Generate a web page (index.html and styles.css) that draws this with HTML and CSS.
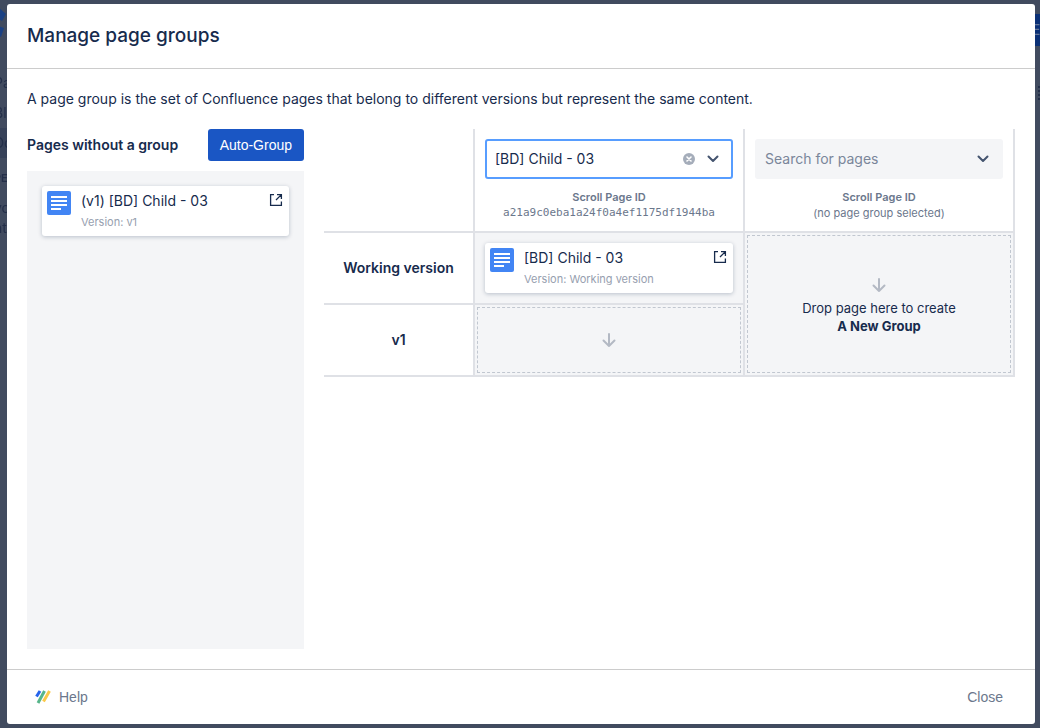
FILE: index.html
```html
<!DOCTYPE html>
<html lang="en">
<head>
    <meta charset="UTF-8">
    <meta name="viewport" content="width=device-width, initial-scale=1.0">
    <title>Manage page groups</title>
    <link rel="stylesheet" href="styles.css">
</head>
<body>
    <!-- Page behind the dialog -->
    <div class="backdrop" aria-hidden="true">
        <div class="page-sidebar">
            <svg class="page-logo" width="24" height="40" viewBox="0 0 24 40">
                <path d="M0 3L5 0L12 6L8 13L0 8ZM0 20L3 18L10 20L7 29L0 26Z" fill="#1b4184"/>
            </svg>
            <div class="page-link">Pa</div>
            <div class="page-link">Blo</div>
            <div class="page-link active">Do</div>
            <div class="page-heading">PE</div>
            <div class="page-note">yo<br>nt</div>
        </div>
        <div class="page-actions">
            <div class="page-edit">E</div>
            <div class="page-lines"></div>
        </div>
    </div>

    <div class="modal" role="dialog" aria-labelledby="modalTitle">
        <header class="modal-header">
            <h1 id="modalTitle">Manage page groups</h1>
        </header>

        <main class="modal-body">
            <p class="intro">A page group is the set of Confluence pages that belong to different versions but represent the same content.</p>

            <div class="columns">
                <!-- Ungrouped pages -->
                <section class="ungrouped">
                    <div class="ungrouped-header">
                        <h2>Pages without a group</h2>
                        <button type="button" class="primary-button">Auto-Group</button>
                    </div>
                    <div class="page-list">
                        <div class="page-card">
                            <svg class="page-icon" width="24" height="24" viewBox="0 0 24 24">
                                <rect width="24" height="24" rx="2" fill="#4285f4"/>
                                <path d="M4 6h16M4 10h16M4 14h16M4 18h10" stroke="#fff" stroke-width="2"/>
                            </svg>
                            <div class="page-text">
                                <div class="page-title">(v1) [BD] Child - 03</div>
                                <div class="page-version">Version: v1</div>
                            </div>
                            <a href="#" class="open-link" aria-label="Open page">
                                <svg width="14" height="14" viewBox="0 0 14 14" fill="none" stroke="#172b4d" stroke-width="1.3">
                                    <path d="M5 1.600H1.600v10.800h10.800V8.500M8 1.600h4.400V6M12.400 1.600L7 7"/>
                                </svg>
                            </a>
                        </div>
                    </div>
                </section>

                <!-- Groups by version -->
                <table class="groups">
                    <thead>
                        <tr>
                            <td class="version-col"></td>
                            <th scope="col">
                                <div class="search-box focused">
                                    <input type="text" value="[BD] Child - 03" aria-label="Page group">
                                    <button type="button" class="icon-button" aria-label="Clear">
                                        <svg width="12" height="12" viewBox="0 0 12 12">
                                            <circle cx="6" cy="6" r="6" fill="#a5adba"/>
                                            <path d="M4 4l4 4M8 4l-4 4" stroke="#fff" stroke-width="1.6" stroke-linecap="round"/>
                                        </svg>
                                    </button>
                                    <button type="button" class="icon-button" aria-label="Show pages">
                                        <svg width="12" height="8" viewBox="0 0 12 8" fill="none" stroke="#44546f" stroke-width="2" stroke-linecap="round" stroke-linejoin="round">
                                            <path d="M1.500 1.500L6 6l4.500-4.500"/>
                                        </svg>
                                    </button>
                                </div>
                                <div class="id-label">Scroll Page ID</div>
                                <div class="id-value mono">a21a9c0eba1a24f0a4ef1175df1944ba</div>
                            </th>
                            <th scope="col">
                                <div class="search-box">
                                    <input type="text" placeholder="Search for pages" aria-label="New page group">
                                    <button type="button" class="icon-button" aria-label="Show pages">
                                        <svg width="12" height="8" viewBox="0 0 12 8" fill="none" stroke="#44546f" stroke-width="2" stroke-linecap="round" stroke-linejoin="round">
                                            <path d="M1.500 1.500L6 6l4.500-4.500"/>
                                        </svg>
                                    </button>
                                </div>
                                <div class="id-label">Scroll Page ID</div>
                                <div class="id-value">(no page group selected)</div>
                            </th>
                        </tr>
                    </thead>
                    <tbody>
                        <tr>
                            <th scope="row" class="version-name">Working version</th>
                            <td class="filled">
                                <div class="page-card">
                                    <svg class="page-icon" width="24" height="24" viewBox="0 0 24 24">
                                        <rect width="24" height="24" rx="2" fill="#4285f4"/>
                                        <path d="M4 6h16M4 10h16M4 14h16M4 18h10" stroke="#fff" stroke-width="2"/>
                                    </svg>
                                    <div class="page-text">
                                        <div class="page-title">[BD] Child - 03</div>
                                        <div class="page-version">Version: Working version</div>
                                    </div>
                                    <a href="#" class="open-link" aria-label="Open page">
                                        <svg width="14" height="14" viewBox="0 0 14 14" fill="none" stroke="#172b4d" stroke-width="1.3">
                                            <path d="M5 1.600H1.600v10.800h10.800V8.500M8 1.600h4.400V6M12.400 1.600L7 7"/>
                                        </svg>
                                    </a>
                                </div>
                            </td>
                            <td class="drop-cell" rowspan="2">
                                <div class="drop-zone tall">
                                    <svg width="24" height="24" viewBox="0 0 24 24" fill="none" stroke="#b3b9c4" stroke-width="2" stroke-linecap="round" stroke-linejoin="round">
                                        <path d="M12 6v12M6.500 12.500L12 18l5.500-5.500"/>
                                    </svg>
                                    <div class="drop-text">Drop page here to create<br><strong>A New Group</strong></div>
                                </div>
                            </td>
                        </tr>
                        <tr>
                            <th scope="row" class="version-name">v1</th>
                            <td class="drop-cell">
                                <div class="drop-zone">
                                    <svg width="24" height="24" viewBox="0 0 24 24" fill="none" stroke="#b3b9c4" stroke-width="2" stroke-linecap="round" stroke-linejoin="round">
                                        <path d="M12 6v12M6.500 12.500L12 18l5.500-5.500"/>
                                    </svg>
                                </div>
                            </td>
                        </tr>
                    </tbody>
                </table>
            </div>
        </main>

        <footer class="modal-footer">
            <a href="#" class="footer-link">
                <svg width="16" height="14" viewBox="0 0 16 14" fill="none" stroke-width="3">
                    <path d="M5 1L1.500 6.500" stroke="#2563eb"/>
                    <path d="M9.500 1L3 13" stroke="#57b58a"/>
                    <path d="M14.500 1L8.500 11.500" stroke="#fbc94a"/>
                </svg>
                Help
            </a>
            <button type="button" class="footer-button">Close</button>
        </footer>
    </div>
</body>
</html>
```
FILE: styles.css
```css
* {
    box-sizing: border-box;
}

body {
    font-family: Inter, "Liberation Sans", sans-serif;
    font-size: 14px;
    line-height: 20px;
    margin: 0;
    background-color: #414b5f;
    color: #172b4d;
}

h1, h2, p {
    margin: 0;
}

/* Page behind the dialog */
.backdrop {
    position: fixed;
    inset: 0;
    display: flex;
    justify-content: space-between;
    overflow: hidden;
    color: #242f49;
}

.page-sidebar {
    width: 40px;
    margin-left: -6px;
    padding-top: 8px;
}

.page-logo {
    display: block;
    margin-bottom: 20px;
}

.page-link {
    height: 30px;
    line-height: 30px;
}

.page-link.active {
    background-color: #374259;
}

.page-heading {
    margin-top: 10px;
    font-size: 11px;
    font-weight: 600;
}

.page-note {
    margin-top: 10px;
}

.page-actions {
    width: 8px;
    padding-top: 14px;
}

.page-edit {
    height: 32px;
    line-height: 32px;
    background-color: #0b3076;
    color: #65779a;
    text-align: right;
}

.page-lines {
    height: 14px;
    margin: 40px 0 0 6px;
    background: repeating-linear-gradient(#242f49 0 2px, transparent 2px 4px);
}

/* Dialog */
.modal {
    position: relative;
    display: flex;
    flex-direction: column;
    min-height: calc(100vh - 8px);
    margin: 4px 5px 4px 7px;
    background-color: #fff;
    border-radius: 3px;
}

.modal-header {
    padding: 20px;
    border-bottom: 1px solid #ccc;
}

.modal-header h1 {
    font-size: 19px;
    line-height: 24px;
    font-weight: 500;
}

.modal-body {
    flex: 1;
    display: flex;
    flex-direction: column;
    gap: 20px;
    padding: 20px;
}

.columns {
    flex: 1;
    display: flex;
    align-items: flex-start;
    gap: 20px;
}

/* Ungrouped pages */
.ungrouped {
    align-self: stretch;
    flex: none;
    display: flex;
    flex-direction: column;
    gap: 10px;
    width: 277px;
}

.ungrouped-header {
    display: flex;
    align-items: center;
    justify-content: space-between;
}

.ungrouped-header h2 {
    font-size: 14px;
    font-weight: 600;
}

.primary-button {
    height: 32px;
    padding: 0 12px;
    border: none;
    border-radius: 3px;
    background-color: #1a56c4;
    color: #fff;
    font-family: "Liberation Sans", sans-serif;
    font-size: 14px;
    cursor: pointer;
}

.page-list {
    flex: 1;
    padding: 15px;
    background-color: #f4f5f7;
}

.page-card {
    display: flex;
    align-items: flex-start;
    gap: 10px;
    height: 50px;
    padding: 5px;
    border-radius: 3px;
    background-color: #fff;
    box-shadow: 0 1px 4px rgba(9, 30, 66, 0.25);
}

.page-text {
    flex: 1;
}

.page-version {
    margin-top: 1px;
    color: #97a0af;
    font-size: 11px;
}

.open-link {
    padding: 2px 1px;
    line-height: 0;
}

/* Groups table */
.groups {
    flex: 1;
    width: 100%;
    table-layout: fixed;
    border-spacing: 0;
}

.groups th,
.groups td {
    height: 72px;
    padding: 10px;
    border-right: 2px solid #dfe1e6;
    border-bottom: 2px solid #dfe1e6;
}

.groups thead th {
    font-weight: 400;
}

.groups .version-col {
    width: 151px;
}

.groups .version-name {
    font-weight: 600;
    text-align: center;
}

.groups .filled,
.groups .drop-cell {
    background-color: #f4f5f7;
}

.groups .drop-cell {
    padding: 2px;
}

.search-box {
    display: flex;
    align-items: center;
    gap: 12px;
    height: 40px;
    padding: 0 12px 0 8px;
    border: 2px solid #f4f5f7;
    border-radius: 3px;
    background-color: #f4f5f7;
}

.search-box.focused {
    border-color: #579dff;
    background-color: #fff;
}

.search-box input {
    flex: 1;
    min-width: 0;
    padding: 0;
    border: none;
    outline: none;
    background: none;
    color: #172b4d;
    font: inherit;
}

.search-box input::placeholder {
    color: #7a869a;
    opacity: 1;
}

.icon-button {
    display: flex;
    padding: 0;
    border: none;
    background: none;
    cursor: pointer;
}

.id-label,
.id-value {
    color: #6b778c;
    font-size: 11px;
    line-height: 16px;
}

.id-label {
    margin-top: 10px;
    font-weight: 600;
}

.id-value.mono {
    font-family: "DejaVu Sans Mono", monospace;
}

.drop-zone {
    display: flex;
    flex-direction: column;
    align-items: center;
    justify-content: center;
    gap: 2px;
    height: 66px;
    border: 1px dashed #c1c7d0;
}

.drop-zone.tall {
    height: 138px;
}

.drop-text {
    font-size: 13px;
    line-height: 18px;
    text-align: center;
}

/* Footer */
.modal-footer {
    display: flex;
    align-items: center;
    justify-content: space-between;
    height: 55px;
    padding: 0 32px 0 28px;
    border-top: 1px solid #ccc;
    font-family: "Liberation Sans", sans-serif;
}

.footer-link {
    display: flex;
    align-items: center;
    gap: 8px;
    color: #6b778c;
    text-decoration: none;
}

.footer-button {
    padding: 0;
    border: none;
    background: none;
    color: #6b778c;
    font: inherit;
    cursor: pointer;
}
```
